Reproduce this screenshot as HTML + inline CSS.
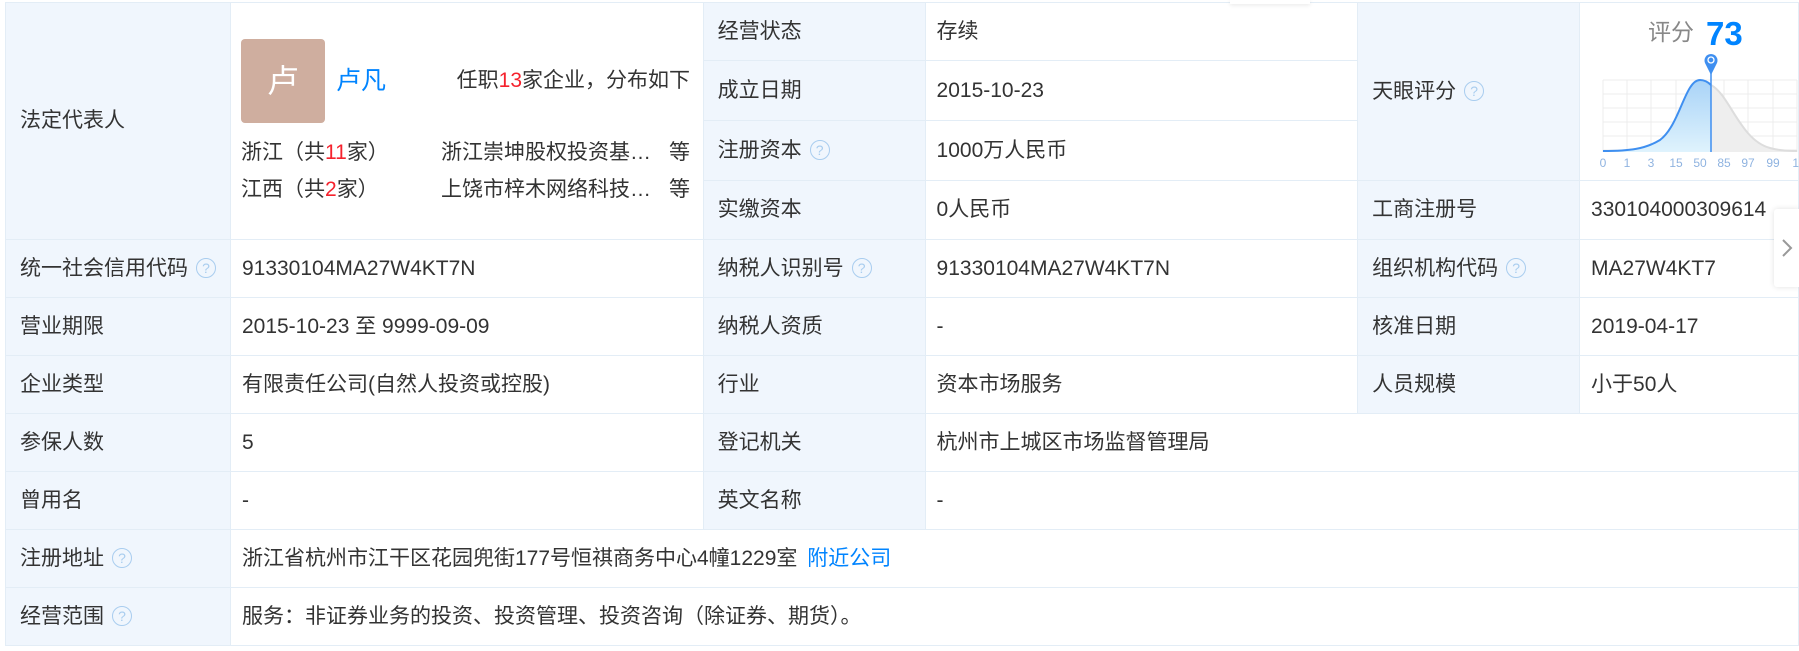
<!DOCTYPE html>
<html><head><meta charset="utf-8"><style>
body{margin:0;width:1799px;height:651px;background:#fff;overflow:hidden;font-family:"Liberation Sans","Noto Sans CJK SC",sans-serif;font-size:21px;line-height:22px;color:#333;position:relative}
table{position:absolute;left:5px;top:2px;border-collapse:collapse;table-layout:fixed}
td{border:1px solid #e3edf6;padding:0 0 0 11px;vertical-align:middle;white-space:nowrap;line-height:22px}
td.l{background:#f0f6fd;padding-left:14px}
.q{display:inline-block;width:18px;height:18px;border:1.5px solid #a9cdef;border-radius:50%;color:#a9cdef;font-size:14px;line-height:18px;text-align:center;vertical-align:2px;margin-left:8px;box-sizing:content-box}
.r{color:#f5222d}
.b{color:#0084ff}
.abs{position:absolute;line-height:22px}
</style></head><body>
<table>
<colgroup><col style="width:225px"><col style="width:473px"><col style="width:222px"><col style="width:433px"><col style="width:222px"><col style="width:219px"></colgroup>
<tr style="height:58px"><td class="l" rowspan="4">法定代表人</td><td rowspan="4"></td><td class="l">经营状态</td><td>存续</td><td class="l" rowspan="3">天眼评分<span class="q">?</span></td><td rowspan="3"></td></tr>
<tr style="height:60px"><td class="l">成立日期</td><td>2015-10-23</td></tr>
<tr style="height:60px"><td class="l">注册资本<span class="q">?</span></td><td>1000万人民币</td></tr>
<tr style="height:59px"><td class="l">实缴资本</td><td>0人民币</td><td class="l">工商注册号</td><td>330104000309614</td></tr>
<tr style="height:58px"><td class="l">统一社会信用代码<span class="q">?</span></td><td>91330104MA27W4KT7N</td><td class="l">纳税人识别号<span class="q">?</span></td><td>91330104MA27W4KT7N</td><td class="l">组织机构代码<span class="q">?</span></td><td>MA27W4KT7</td></tr>
<tr style="height:58px"><td class="l">营业期限</td><td>2015-10-23 至 9999-09-09</td><td class="l">纳税人资质</td><td>-</td><td class="l">核准日期</td><td>2019-04-17</td></tr>
<tr style="height:58px"><td class="l">企业类型</td><td>有限责任公司(自然人投资或控股)</td><td class="l">行业</td><td>资本市场服务</td><td class="l">人员规模</td><td>小于50人</td></tr>
<tr style="height:58px"><td class="l">参保人数</td><td>5</td><td class="l">登记机关</td><td colspan="3">杭州市上城区市场监督管理局</td></tr>
<tr style="height:58px"><td class="l">曾用名</td><td>-</td><td class="l">英文名称</td><td colspan="3">-</td></tr>
<tr style="height:58px"><td class="l">注册地址<span class="q">?</span></td><td colspan="5">浙江省杭州市江干区花园兜街177号恒祺商务中心4幢1229室 <span class="b" style="margin-left:4px">附近公司</span></td></tr>
<tr style="height:58px"><td class="l">经营范围<span class="q">?</span></td><td colspan="5">服务：非证券业务的投资、投资管理、投资咨询（除证券、期货）。</td></tr>
</table>

<div class="abs" style="left:241px;top:39px;width:84px;height:84px;background:#cfae9f;border-radius:4px;color:#fff;font-size:32px;line-height:84px;text-align:center">卢</div>
<div class="abs b" style="left:336px;top:67px;font-size:25px;line-height:28px">卢凡</div>
<div class="abs" style="left:430px;top:70px;width:260px;text-align:right">任职<span class="r">13</span>家企业，分布如下</div>
<div class="abs" style="left:241px;top:142px">浙江（共<span class="r">11</span>家）</div>
<div class="abs" style="left:441px;top:142px">浙江崇坤股权投资基…</div>
<div class="abs" style="left:669px;top:142px">等</div>
<div class="abs" style="left:241px;top:179px">江西（共<span class="r">2</span>家）</div>
<div class="abs" style="left:441px;top:179px">上饶市梓木网络科技…</div>
<div class="abs" style="left:669px;top:179px">等</div>

<div class="abs" style="left:1648px;top:21px;font-size:23px;color:#888">评分</div>
<div class="abs" style="left:1706px;top:17px;font-size:33px;line-height:34px;font-weight:bold;color:#0084ff">73</div>
<svg class="abs" style="left:1600px;top:50px" width="199" height="120" viewBox="0 0 199 120">
<defs><linearGradient id="g" x1="0" y1="0" x2="0" y2="1"><stop offset="0" stop-color="#a9d3f7"/><stop offset="1" stop-color="#dff3fd"/></linearGradient></defs>
<g stroke="#ececec" stroke-width="1">
<line x1="3" y1="30" x2="197" y2="30"/><line x1="3" y1="44" x2="197" y2="44"/><line x1="3" y1="58" x2="197" y2="58"/><line x1="3" y1="72" x2="197" y2="72"/><line x1="3" y1="86" x2="197" y2="86"/><line x1="3" y1="100" x2="197" y2="100"/>
<line x1="3" y1="30" x2="3" y2="102"/><line x1="27" y1="30" x2="27" y2="102"/><line x1="51" y1="30" x2="51" y2="102"/><line x1="76" y1="30" x2="76" y2="102"/><line x1="100" y1="30" x2="100" y2="102"/><line x1="124" y1="30" x2="124" y2="102"/><line x1="148" y1="30" x2="148" y2="102"/><line x1="173" y1="30" x2="173" y2="102"/><line x1="197" y1="30" x2="197" y2="102"/>
</g>
<path d="M111 35 C130 45 140 90 170 98 C180 101 190 101 197 101 L197 102 L111 102Z" fill="#eee"/>
<path d="M111 35 C130 45 140 90 170 98 C180 101 190 101 197 101" fill="none" stroke="#ddd" stroke-width="2"/>
<path d="M3 101 C30 101 45 99 60 90 C80 75 85 30 100 30 C105 30 108 32 111 35 L111 102 L3 102Z" fill="url(#g)"/>
<path d="M3 101 C30 101 45 99 60 90 C80 75 85 30 100 30 C105 30 108 32 111 35" fill="none" stroke="#3f8ff0" stroke-width="2"/>
<line x1="111" y1="14" x2="111" y2="102" stroke="#3f8ff0" stroke-width="1.5"/>
<path d="M111 25 L105 13 A6.5 6.5 0 1 1 117 13Z" fill="#3f8ff0"/>
<circle cx="111" cy="10" r="3" fill="none" stroke="#fff" stroke-width="1.3"/>
<g font-size="12" fill="#8fb3e0" font-family="Liberation Sans,sans-serif" text-anchor="middle">
<text x="3" y="117">0</text><text x="27" y="117">1</text><text x="51" y="117">3</text><text x="76" y="117">15</text><text x="100" y="117">50</text><text x="124" y="117">85</text><text x="148" y="117">97</text><text x="173" y="117">99</text><text x="199" y="117">10</text>
</g>
</svg>
<div class="abs" style="left:1774px;top:209px;width:25px;height:78px;background:#fff;box-shadow:0 0 6px rgba(0,0,0,.12);border-radius:3px 0 0 3px">
<svg width="25" height="78"><path d="M9 31 L17 39 L9 47" fill="none" stroke="#999" stroke-width="2"/></svg></div>
<div class="abs" style="left:1230px;top:0;width:80px;height:4px;background:#fff;box-shadow:0 1px 4px rgba(0,0,0,.1)"></div>
</body></html>
